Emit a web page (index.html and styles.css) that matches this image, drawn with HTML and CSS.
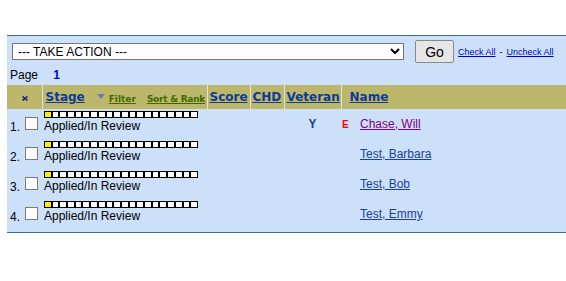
FILE: index.html
```html
<!DOCTYPE html>
<html lang="en">
<head>
    <meta charset="UTF-8">
    <title>Applicants</title>
    <link rel="stylesheet" href="styles.css">
</head>
<body>

    <div class="panel">
        <!-- action bar -->
        <div class="action-bar">
            <select class="action-select">
                <option>--- TAKE ACTION ---</option>
            </select>
            <button class="go-btn">Go</button>
            <a href="#" class="small-link">Check All</a>
            <span class="dash">-</span>
            <a href="#" class="small-link">Uncheck All</a>
        </div>

        <div class="pager">Page <span class="page-num">1</span></div>

        <table class="grid">
            <colgroup>
                <col class="c-check">
                <col class="c-stage">
                <col class="c-score">
                <col class="c-chd">
                <col class="c-vet">
                <col>
            </colgroup>
            <thead>
                <tr>
                    <th class="th-x">
                        <svg width="6" height="5" viewBox="0 0 6 5"><path d="M0.5 0.5 L5.5 4.5 M5.5 0.5 L0.5 4.5" stroke="#1a1f6e" stroke-width="1.6"/></svg>
                    </th>
                    <th>
                        <div class="stage-head">
                            <a href="#" class="head-link">Stage</a>
                            <span class="tri"></span>
                            <a href="#" class="tool-link">Filter</a>
                            <a href="#" class="tool-link sort">Sort &amp; Rank</a>
                        </div>
                    </th>
                    <th><a href="#" class="head-link">Score</a></th>
                    <th><a href="#" class="head-link">CHD</a></th>
                    <th><a href="#" class="head-link">Veteran</a></th>
                    <th class="th-name"><a href="#" class="head-link">Name</a></th>
                </tr>
            </thead>
            <tbody id="rows"></tbody>
        </table>
    </div>

    <script>
        var people = [
            { name: "Chase, Will", vet: "Y", flag: "E", visited: true },
            { name: "Test, Barbara", vet: "", flag: "" },
            { name: "Test, Bob", vet: "", flag: "" },
            { name: "Test, Emmy", vet: "", flag: "" }
        ];

        function stageBar(done) {
            var html = '<div class="bar">';
            for (var i = 0; i < 20; i++) {
                html += '<span class="' + (i < done ? "on" : "") + '"></span>';
            }
            return html + '</div>';
        }

        var tbody = document.getElementById("rows");
        people.forEach(function (p, i) {
            var tr = document.createElement("tr");
            tr.innerHTML =
                '<td class="td-check">' + (i + 1) + '.<input type="checkbox" class="box"></td>' +
                '<td class="td-stage">' + stageBar(1) + '<div>Applied/In Review</div></td>' +
                '<td></td><td></td>' +
                '<td class="td-vet">' + p.vet + '</td>' +
                '<td class="td-name"><span class="flag">' + p.flag + '</span>' +
                '<a href="#" class="person' + (p.visited ? ' visited' : '') + '">' + p.name + '</a></td>';
            tbody.appendChild(tr);
        });
    </script>

</body>
</html>
```

FILE: styles.css
```css
body {
    margin: 0;
    font-family: "Liberation Sans", Arial, sans-serif;
    font-size: 12px;
    color: #000;
    background: #fff;
}

.panel {
    margin: 35px 0 0 7px;
    background: #cde0fa;
    border-top: 1px solid #3a6ca8;
    border-bottom: 1px solid #3a6ca8;
    padding-bottom: 3px;
}

/* action bar */
.action-bar {
    display: flex;
    align-items: center;
    padding: 4px 0 0 5px;
    height: 23px;
}

.action-select {
    width: 392px;
    height: 17px;
    font-family: "Liberation Sans", Arial, sans-serif;
    font-size: 12px;
    border: 1px solid #767676;
    background: #fff;
    padding: 0 1px;
    margin: 0 11px 0 0;
    border-radius: 0;
}

.go-btn {
    width: 39px;
    height: 23px;
    font-family: "Liberation Sans", Arial, sans-serif;
    font-size: 14px;
    background: #e6e6e6;
    border: 1px solid #8a8a8a;
    border-radius: 2px;
    padding: 0;
    margin-right: 4px;
}

.small-link {
    font-size: 9px;
    color: #0000cc;
}

.dash {
    font-size: 9px;
    margin: 0 4px;
}

.pager {
    padding: 4px 0 0 3px;
    height: 16px;
    line-height: 16px;
    margin-bottom: 2px;
}

.page-num {
    color: #0000ee;
    font-weight: bold;
    margin-left: 12px;
}

/* table */
.grid {
    width: 100%;
    border-collapse: collapse;
    table-layout: fixed;
}

.c-check { width: 35px; }
.c-stage { width: 165px; }
.c-score { width: 43px; }
.c-chd { width: 34px; }
.c-vet { width: 57px; }

.grid th {
    background: #bdb76b;
    height: 24px;
    padding: 0 0 0 2px;
    text-align: left;
    white-space: nowrap;
    border-left: 1px solid #dfe3e6;
}

.grid th:first-child {
    border-left: none;
}

.th-x {
    text-align: center !important;
}

.th-name {
    padding-left: 8px !important;
}

.stage-head {
    display: flex;
    align-items: baseline;
    padding-left: 1px;
}

.head-link {
    font-family: "DejaVu Sans", Verdana, sans-serif;
    font-size: 12px;
    font-weight: bold;
    color: #0b3a9c;
}

.tri {
    width: 0;
    height: 0;
    border-left: 4.5px solid transparent;
    border-right: 4.5px solid transparent;
    border-top: 5px solid #6c7db3;
    margin: 0 4px 0 12px;
    align-self: center;
    position: relative;
    top: -1px;
}

.tool-link {
    font-family: "DejaVu Sans", Verdana, sans-serif;
    font-size: 9px;
    font-weight: bold;
    color: #3f6a00;
    position: relative;
    top: 1px;
}

.tool-link.sort {
    margin-left: 11px;
    letter-spacing: -0.25px;
}

.grid tbody tr {
    height: 30px;
}

.grid td {
    padding: 0;
    vertical-align: middle;
}

.grid td.td-check {
    vertical-align: top;
    padding: 8px 0 0 3px;
    line-height: 14px;
}

.box {
    -webkit-appearance: none;
    appearance: none;
    width: 13px;
    height: 13px;
    border: 1px solid #7a7a7a;
    background: #fff;
    margin: 0 0 0 5px;
    vertical-align: 1px;
}

.grid td.td-stage {
    vertical-align: top;
    padding: 2px 0 0 2px;
    line-height: 14px;
}

.bar {
    display: grid;
    grid-template-columns: repeat(20, 1fr);
    width: 154px;
    height: 7px;
    margin-bottom: 1px;
}

.bar span {
    border: 1px solid #000;
    background: #fff;
}

.bar span.on {
    background: #ffee00;
}

.td-vet {
    text-align: center;
    font-weight: bold;
    color: #1a3e8f;
}

.td-name {
    padding-left: 1px !important;
    white-space: nowrap;
}

.flag {
    display: inline-block;
    width: 7px;
    color: #ff0000;
    font-weight: bold;
    font-size: 10px;
    margin-right: 11px;
}

.person {
    color: #1a3f9c;
}

.person.visited {
    color: #800080;
}
```
